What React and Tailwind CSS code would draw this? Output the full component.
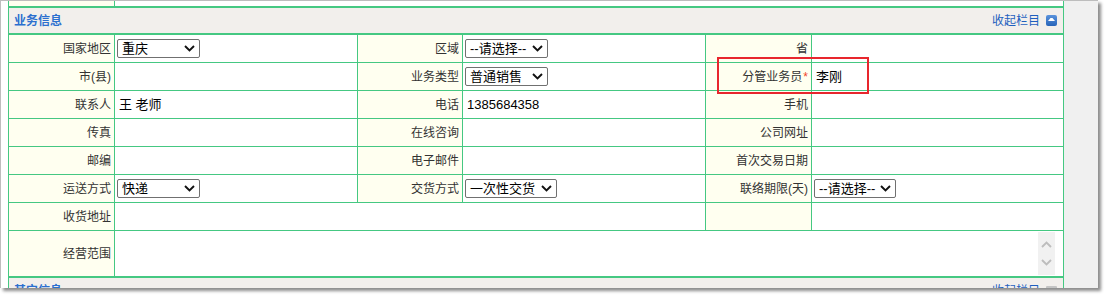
import React from 'react';

const cols = 'grid grid-cols-[106px_243px_105px_243px_106px_1fr]';

const Label = ({ children, span = '' }) => (
    <div className={`flex items-center justify-end border-r border-[#45c882] bg-[#fffff0] pr-[3px] text-[12px] text-[#333] ${span}`}>
        {children}
    </div>
);

const Value = ({ children, span = '', last = false }) => (
    <div className={`flex items-center bg-white pl-[4px] text-[13px] text-black ${last ? '' : 'border-r border-[#45c882]'} ${span}`}>
        {children}
    </div>
);

const Chevron = ({ color = '#111', up = false }) => (
    <svg width="11" height="7" viewBox="0 0 11 7">
        <path d={up ? 'M1 6l4.5-4.5L10 6' : 'M1 1l4.5 4.5L10 1'} stroke={color} strokeWidth="1.9" fill="none" />
    </svg>
);

const Select = ({ text, w }) => (
    <div className={`-ml-[2px] flex h-[19px] items-center justify-between rounded-[2px] border border-[#707070] bg-white pl-[4px] pr-[4px] text-[13px] text-black ${w}`}>
        <span>{text}</span>
        <Chevron />
    </div>
);

const Header = ({ title, right, iconGray }) => (
    <div className="flex h-[25px] items-center justify-between bg-[#f2efec] pl-[5px] pr-[6px]">
        <span className="text-[12px] font-bold text-[#2c6fcf]">{title}</span>
        <div className="flex items-center gap-[6px]">
            <span className="text-[12px] text-[#1f5fbf]">{right}</span>
            {iconGray ? (
                <span className="h-[10px] w-[11px] rounded-[1px] bg-[#c4c4c4]" />
            ) : (
                <span className="flex h-[11px] w-[11px] items-start justify-center rounded-[2px] bg-gradient-to-b from-[#5b93dc] to-[#2864b8] pt-[3px]">
                    <svg width="7" height="3" viewBox="0 0 7 3"><path d="M0 3L2.5 0h2L7 3z" fill="#fff" /></svg>
                </span>
            )}
        </div>
    </div>
);

const App = () => {
    return (
        <div className="relative h-[296px] w-[1108px] overflow-hidden bg-white font-['Liberation_Sans','Noto_Sans_CJK_SC',sans-serif] leading-none">
            <div className="flex h-[288px] w-[1098px] overflow-hidden border-l border-t border-[#bdbdbd] bg-white shadow-[3px_3px_3px_rgba(0,0,0,0.45)]">
                <div className="w-[1063px] shrink-0 pl-[7px]">
                    <div className="border-l border-r border-[#45c882]">
                        {/* tail of the section above */}
                        <div className={`${cols} h-[7px] border-b-2 border-[#45c882]`}>
                            <div className="border-r border-[#45c882] bg-[#fffff0]" />
                            <div className="col-span-5 bg-white" />
                        </div>

                        <div className="border-b-2 border-[#45c882]">
                            <Header title="业务信息" right="收起栏目" />
                        </div>

                        <div className={`${cols} h-[28px] border-b border-[#45c882]`}>
                            <Label>国家地区</Label>
                            <Value><Select text="重庆" w="w-[83px]" /></Value>
                            <Label>区域</Label>
                            <Value><Select text="--请选择--" w="w-[83px]" /></Value>
                            <Label>省</Label>
                            <Value last />
                        </div>

                        <div className={`${cols} h-[28px] border-b border-[#45c882]`}>
                            <Label>市(县)</Label>
                            <Value />
                            <Label>业务类型</Label>
                            <Value><Select text="普通销售" w="w-[83px]" /></Value>
                            <Label>分管业务员<span className="ml-[1px] text-[#f0452a]">*</span></Label>
                            <Value last>李刚</Value>
                        </div>

                        <div className={`${cols} h-[28px] border-b border-[#45c882]`}>
                            <Label>联系人</Label>
                            <Value>王 老师</Value>
                            <Label>电话</Label>
                            <Value>1385684358</Value>
                            <Label>手机</Label>
                            <Value last />
                        </div>

                        <div className={`${cols} h-[28px] border-b border-[#45c882]`}>
                            <Label>传真</Label>
                            <Value />
                            <Label>在线咨询</Label>
                            <Value />
                            <Label>公司网址</Label>
                            <Value last />
                        </div>

                        <div className={`${cols} h-[28px] border-b border-[#45c882]`}>
                            <Label>邮编</Label>
                            <Value />
                            <Label>电子邮件</Label>
                            <Value />
                            <Label>首次交易日期</Label>
                            <Value last />
                        </div>

                        <div className={`${cols} h-[28px] border-b border-[#45c882]`}>
                            <Label>运送方式</Label>
                            <Value><Select text="快递" w="w-[83px]" /></Value>
                            <Label>交货方式</Label>
                            <Value><Select text="一次性交货" w="w-[92px]" /></Value>
                            <Label>联络期限(天)</Label>
                            <Value last><Select text="--请选择--" w="w-[82px]" /></Value>
                        </div>

                        <div className={`${cols} h-[28px] border-b border-[#45c882]`}>
                            <Label>收货地址</Label>
                            <Value span="col-span-3" />
                            <Label />
                            <Value last />
                        </div>

                        <div className={`${cols} h-[47px] border-b-2 border-[#45c882]`}>
                            <Label>经营范围</Label>
                            <div className="col-span-5 flex justify-end bg-white py-[1px] pr-[8px]">
                                <div className="flex w-[17px] flex-col items-center justify-around bg-[#f1f1f1] py-[3px]">
                                    <Chevron color="#bdbdbd" up />
                                    <Chevron color="#bdbdbd" />
                                </div>
                            </div>
                        </div>

                        <Header title="其它信息" right="收起栏目" iconGray />
                    </div>
                </div>
                <div className="flex-1 bg-[#f0f0f0]" />
            </div>

            {/* highlight annotation */}
            <div className="absolute left-[717px] top-[57px] h-[37px] w-[152px] border-2 border-[#e8262d]" />
        </div>
    );
};

export default App;
